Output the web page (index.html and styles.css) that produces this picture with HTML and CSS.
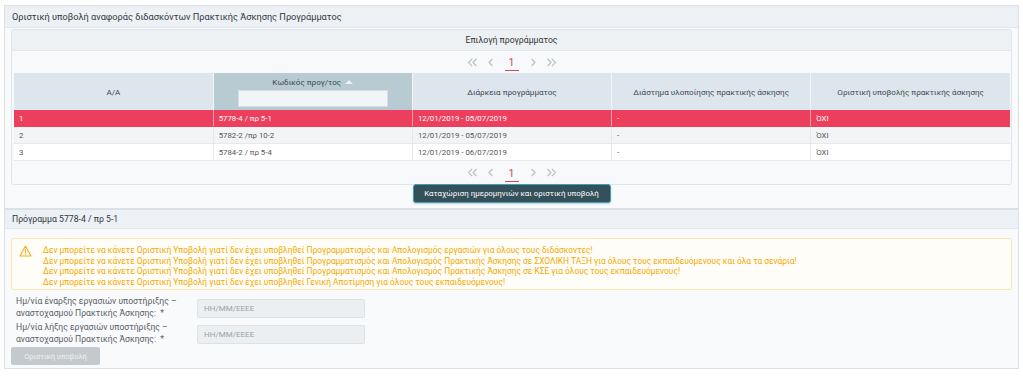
FILE: index.html
```html
<!DOCTYPE html>
<html>
	<head>
		<meta charset="utf-8">
		<title>Οριστική υποβολή</title>
		<link rel="stylesheet" href="styles.css">
	</head>
	<body>
		<div class="page">
			<div class="panel">
				<div class="panelHead">Οριστική υποβολή αναφοράς διδασκόντων Πρακτικής Άσκησης Προγράμματος</div>
				<div class="panelBody top">
					<div class="card">
						<div class="cardHead">Επιλογή προγράμματος</div>
						<div class="pager">
							<svg class="pg" width="11" height="9" viewBox="0 0 11 9"><path d="M5 1 L1.5 4.5 L5 8 M9.5 1 L6 4.5 L9.5 8" fill="none" stroke="#b8c1c7" stroke-width="1.1"/></svg>
							<svg class="pg" width="6" height="9" viewBox="0 0 6 9"><path d="M4.5 1 L1 4.5 L4.5 8" fill="none" stroke="#b8c1c7" stroke-width="1.1"/></svg>
							<span class="cur">1</span>
							<svg class="pg" width="6" height="9" viewBox="0 0 6 9"><path d="M1.5 1 L5 4.5 L1.5 8" fill="none" stroke="#b8c1c7" stroke-width="1.1"/></svg>
							<svg class="pg" width="11" height="9" viewBox="0 0 11 9"><path d="M1.5 1 L5 4.5 L1.5 8 M6 1 L9.5 4.5 L6 8" fill="none" stroke="#b8c1c7" stroke-width="1.1"/></svg>
						</div>
						<table class="grid">
							<thead>
								<tr>
									<th>Α/Α</th>
									<th class="sorted">
										<div>Κωδικός προγ/τος <span class="caret"></span></div>
										<input type="text" class="filter">
									</th>
									<th>Διάρκεια προγράμματος</th>
									<th>Διάστημα υλοποίησης πρακτικής άσκησης</th>
									<th>Οριστική υποβολής πρακτικής άσκησης</th>
								</tr>
							</thead>
							<tbody>
								<tr class="sel">
									<td>1</td><td>5778-4 / πρ 5-1</td><td>12/01/2019 - 05/07/2019</td><td>-</td><td>ΌΧΙ</td>
								</tr>
								<tr class="odd">
									<td>2</td><td>5782-2 /πρ 10-2</td><td>12/01/2019 - 05/07/2019</td><td>-</td><td>ΌΧΙ</td>
								</tr>
								<tr>
									<td>3</td><td>5784-2 / πρ 5-4</td><td>12/01/2019 - 06/07/2019</td><td>-</td><td>ΌΧΙ</td>
								</tr>
							</tbody>
						</table>
						<div class="pager bottom">
							<svg class="pg" width="11" height="9" viewBox="0 0 11 9"><path d="M5 1 L1.5 4.5 L5 8 M9.5 1 L6 4.5 L9.5 8" fill="none" stroke="#b8c1c7" stroke-width="1.1"/></svg>
							<svg class="pg" width="6" height="9" viewBox="0 0 6 9"><path d="M4.5 1 L1 4.5 L4.5 8" fill="none" stroke="#b8c1c7" stroke-width="1.1"/></svg>
							<span class="cur">1</span>
							<svg class="pg" width="6" height="9" viewBox="0 0 6 9"><path d="M1.5 1 L5 4.5 L1.5 8" fill="none" stroke="#b8c1c7" stroke-width="1.1"/></svg>
							<svg class="pg" width="11" height="9" viewBox="0 0 11 9"><path d="M1.5 1 L5 4.5 L1.5 8 M6 1 L9.5 4.5 L6 8" fill="none" stroke="#b8c1c7" stroke-width="1.1"/></svg>
						</div>
					</div>
					<div class="btnRow">
						<button class="btnDark">Καταχώριση ημερομηνιών και οριστική υποβολή</button>
					</div>
				</div>
			</div>
			<div class="panel">
				<div class="panelHead small">Πρόγραμμα 5778-4 / πρ 5-1</div>
				<div class="panelBody">
					<div class="alert">
						<svg class="warnIcon" width="13" height="12" viewBox="0 0 13 12">
							<path d="M6.5 1 L12 11 L1 11 Z" fill="none" stroke="#f2b01e" stroke-width="1.1" stroke-linejoin="round"/>
							<path d="M6.5 4.5 V7.8" stroke="#f2b01e" stroke-width="1.1" stroke-linecap="round"/>
							<circle cx="6.5" cy="9.4" r="0.6" fill="#f2b01e"/>
						</svg>
						<div class="alertText">
							<p>Δεν μπορείτε να κάνετε Οριστική Υποβολή γιατί δεν έχει υποβληθεί Προγραμματισμός και Απολογισμός εργασιών για όλους τους διδάσκοντες!</p>
							<p>Δεν μπορείτε να κάνετε Οριστική Υποβολή γιατί δεν έχει υποβληθεί Προγραμματισμός και Απολογισμός Πρακτικής Άσκησης σε ΣΧΟΛΙΚΗ ΤΑΞΗ για όλους τους εκπαιδευόμενους και όλα τα σενάρια!</p>
							<p>Δεν μπορείτε να κάνετε Οριστική Υποβολή γιατί δεν έχει υποβληθεί Προγραμματισμός και Απολογισμός Πρακτικής Άσκησης σε ΚΣΕ για όλους τους εκπαιδευόμενους!</p>
							<p>Δεν μπορείτε να κάνετε Οριστική Υποβολή γιατί δεν έχει υποβληθεί Γενική Αποτίμηση για όλους τους εκπαιδευόμενους!</p>
						</div>
					</div>
					<div class="form">
						<div class="formRow">
							<label>Ημ/νία έναρξης εργασιών υποστήριξης – αναστοχασμού Πρακτικής Άσκησης:&nbsp; *</label>
							<input type="text" class="dateIn" placeholder="ΗΗ/ΜΜ/ΕΕΕΕ">
						</div>
						<div class="formRow">
							<label>Ημ/νία λήξης εργασιών υποστήριξης – αναστοχασμού Πρακτικής Άσκησης:&nbsp; *</label>
							<input type="text" class="dateIn" placeholder="ΗΗ/ΜΜ/ΕΕΕΕ">
						</div>
					</div>
					<button class="btnOff" disabled>Οριστική υποβολή</button>
				</div>
			</div>
		</div>
	</body>
</html>
```

FILE: styles.css
```css
body{
	margin: 0;
	background-color: #ffffff;
	font-family: Roboto, "Noto Sans", "DejaVu Sans", sans-serif;
	color: #444;
}
.page{padding: 5px 4px 0;}
.panel{
	border: 1px solid #dae1e6;
	background-color: #f8fafb;
}
.panel + .panel{border-top: none;}
.panelHead{
	height: 22px;
	line-height: 22px;
	padding-left: 7px;
	font-size: 9.2px;
	color: #2f3840;
	background-color: #edf1f5;
	border-bottom: 1px solid #e1e7eb;
	box-sizing: border-box;
}
.panelHead.small{
	height: 20px;
	line-height: 19px;
	font-size: 8.7px;
	border-top: 1px solid #dae1e6;
}
.panelBody{padding: 1px 6px 3px;}
.panelBody.top{padding-bottom: 5px;}
.card{
	border: 1px solid #dfe5ea;
	border-radius: 3px;
	background-color: #f7f9fa;
}
.cardHead{
	height: 20px;
	line-height: 20px;
	text-align: center;
	font-size: 8.7px;
	color: #333;
	background-color: #edf1f4;
	border-bottom: 1px solid #e3e8ec;
}
.pager{
	height: 22px;
	display: flex;
	justify-content: center;
	align-items: center;
	gap: 10px;
}
.pager.bottom{height: 23px;}
.pager .cur{
	color: #d8475f;
	font-size: 10.5px;
	border-bottom: 1px solid #d8475f;
	width: 14px;
	text-align: center;
	line-height: 15px;
	margin: 2px 1px 0;
}
.grid{
	width: 996px;
	margin: 0 2px;
	border-collapse: collapse;
	table-layout: fixed;
	font-size: 7.8px;
}
.grid th{
	height: 37px;
	padding: 0;
	font-weight: normal;
	font-size: 8.1px;
	color: #3d464d;
	background-color: #dde6ec;
	border-right: 1px solid #f3f6f8;
}
.grid th:last-child{border-right: none;}
.grid th.sorted{background-color: #b8cbd3;}
.sorted div{margin-bottom: 3px;}
.caret{
	display: inline-block;
	width: 0;
	height: 0;
	border-left: 4px solid transparent;
	border-right: 4px solid transparent;
	border-bottom: 4px solid #e9eff2;
	vertical-align: 1px;
	margin-left: 2px;
}
.filter{
	width: 150px;
	height: 17px;
	box-sizing: border-box;
	border: 1px solid #d5dee3;
	background-color: #f2f5f7;
	margin: 0;
}
.grid td{
	height: 16px;
	padding: 0 0 0 5px;
	color: #555;
	background-color: #ffffff;
	border-right: 1px solid #e3e8eb;
	border-bottom: 1px solid #e6eaed;
	white-space: nowrap;
}
.grid td:last-child{border-right: none;}
.grid tr.odd td{background-color: #f2f4f6;}
.grid tr.sel td{
	background-color: #ec3f5e;
	color: #fff;
	border-right-color: #f3a0af;
	border-bottom-color: #ec3f5e;
}
.btnRow{
	display: flex;
	justify-content: center;
}
.btnDark{
	width: 198px;
	height: 19px;
	margin-top: -1px;
	font-family: Roboto, "Noto Sans", sans-serif;
	font-size: 7.9px;
	color: #fff;
	background-color: #33505b;
	border: 1px solid #3aa0b8;
	border-radius: 3px;
	box-shadow: 0 1px 2px rgba(0,0,0,0.2);
}
.alert{
	margin-top: 8px;
	height: 52px;
	box-sizing: border-box;
	padding: 6px 0 0 7px;
	display: flex;
	gap: 11px;
	border: 1px solid #fae6b3;
	border-radius: 3px;
	background-color: #fffdf8;
}
.alertText p{
	margin: 0;
	font-size: 8.4px;
	line-height: 10.5px;
	color: #f2a900;
}
.form{
	padding: 6px 0 0 5px;
}
.formRow{
	display: flex;
	align-items: flex-start;
	margin-bottom: 3px;
}
.formRow label{
	width: 181px;
	font-size: 8.6px;
	line-height: 11.5px;
	color: #5a6066;
}
.dateIn{
	width: 168px;
	height: 19px;
	margin-top: 3px;
	box-sizing: border-box;
	border: 1px solid #dde2e6;
	border-radius: 2px;
	background-color: #eceff2;
	padding-left: 6px;
	font-family: Roboto, "Noto Sans", sans-serif;
	font-size: 8px;
}
.dateIn::placeholder{color: #9aa1a7;}
.btnOff{
	display: block;
	width: 89px;
	height: 18px;
	margin-top: -1px;
	font-family: Roboto, "Noto Sans", sans-serif;
	font-size: 7.5px;
	color: #eef1f3;
	background-color: #c4c9cd;
	border: none;
	border-radius: 2px;
}
```
